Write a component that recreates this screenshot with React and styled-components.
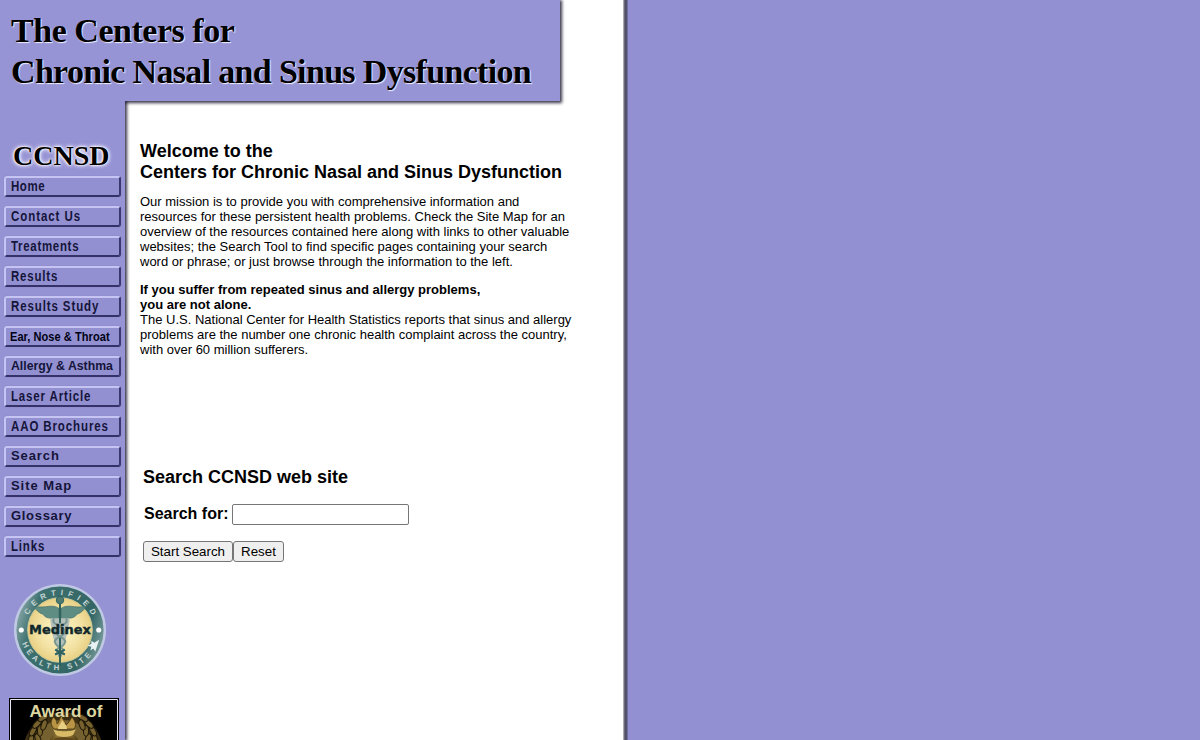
import React from "react"
import styled, { createGlobalStyle } from "styled-components"

const links = [
  { label: "Home", scale: 0.82, gap: 0.7 },
  { label: "Contact Us", scale: 0.82, gap: 1.15 },
  { label: "Treatments", scale: 0.82, gap: 0.85 },
  { label: "Results", scale: 0.82, gap: 1 },
  { label: "Results Study", scale: 0.82, gap: 1.1 },
  { label: "Ear, Nose & Throat", scale: 0.85, gap: 0.05, size: 13, nudge: -1, color: "#000014" },
  { label: "Allergy & Asthma", scale: 0.945, gap: 0, size: 13, up: 1 },
  { label: "Laser Article", scale: 0.82, gap: 1.05 },
  { label: "AAO Brochures", scale: 0.82, gap: 1.1 },
  { label: "Search", scale: 1, gap: 0.9, size: 13, up: 1 },
  { label: "Site Map", scale: 1, gap: 0.95, size: 13, up: 1 },
  { label: "Glossary", scale: 1, gap: 0.7, size: 13, up: 1 },
  { label: "Links", scale: 0.82, gap: 1 },
]

const App = () => {
  return (
    <>
      <GlobalStyle />
      <Page>
        <Banner>
          <BannerTitle>
            <BannerLine $gap={-0.47}>The Centers for</BannerLine>
            <BannerLine $gap={-0.67}>Chronic Nasal and Sinus Dysfunction</BannerLine>
          </BannerTitle>
        </Banner>
        <Columns>
          <Sidebar>
            <Logo>CCNSD</Logo>
            <Nav>
              {links.map(link => (
                <NavLink key={link.label} href="#">
                  <NavLabel
                    $scale={link.scale}
                    $gap={link.gap}
                    $size={link.size}
                    $up={link.up}
                    $nudge={link.nudge}
                    $color={link.color}
                  >
                    {link.label}
                  </NavLabel>
                </NavLink>
              ))}
            </Nav>
            <MedinexSeal />
            <AwardBadge />
          </Sidebar>
          <Content>
            <Heading>
              Welcome to the
              <br />
              Centers for Chronic Nasal and Sinus Dysfunction
            </Heading>
            <Text>
              Our mission is to provide you with comprehensive information and
              <br />
              resources for these persistent health problems. Check the Site Map for an
              <br />
              overview of the resources contained here along with links to other valuable
              <br />
              websites; the Search Tool to find specific pages containing your search
              <br />
              word or phrase; or just browse through the information to the left.
            </Text>
            <Text>
              <b>
                If you suffer from repeated sinus and allergy problems,
                <br />
                you are not alone.
              </b>
              <br />
              The U.S. National Center for Health Statistics reports that sinus and allergy
              <br />
              problems are the number one chronic health complaint across the country,
              <br />
              with over 60 million sufferers.
            </Text>
            <SearchForm onSubmit={e => e.preventDefault()}>
              <Heading>Search CCNSD web site</Heading>
              <SearchRow>
                <SearchLabel htmlFor="search">Search for:</SearchLabel>
                <SearchInput id="search" type="text" />
              </SearchRow>
              <ButtonRow>
                <FormButton type="submit" $width={90}>
                  Start Search
                </FormButton>
                <FormButton type="reset" $width={51}>
                  Reset
                </FormButton>
              </ButtonRow>
            </SearchForm>
          </Content>
        </Columns>
      </Page>
    </>
  )
}

const MedinexSeal = () => (
  <Seal viewBox="0 0 100 100">
    <defs>
      <radialGradient id="parchment">
        <stop offset="0" stopColor="#fff6c8" />
        <stop offset="0.65" stopColor="#f3e2a4" />
        <stop offset="1" stopColor="#e8d084" />
      </radialGradient>
      <linearGradient id="ring" x1="0" y1="0.3" x2="1" y2="0.6">
        <stop offset="0" stopColor="#8ba9a8" />
        <stop offset="0.2" stopColor="#3d7170" />
        <stop offset="0.8" stopColor="#326564" />
        <stop offset="1" stopColor="#779a9b" />
      </linearGradient>
      <path id="arcTop" d="M14.5 54v-4a35.5 35.5 0 0 1 71 0v4" />
      <path id="arcBottom" d="M9 50a41 41 0 0 0 82 0" />
    </defs>
    <circle cx="50" cy="50" r="47" fill="#bfc9e3" />
    <circle cx="50" cy="50" r="44.5" fill="url(#ring)" />
    <circle cx="50" cy="50" r="33" fill="url(#parchment)" stroke="#c8c99a" />
    <SealText $gap={4.8}>
      <textPath href="#arcTop" startOffset="52%" textAnchor="middle">
        CERTIFIED
      </textPath>
    </SealText>
    <SealText $gap={3.5}>
      <textPath href="#arcBottom" startOffset="46%" textAnchor="middle">
        HEALTH SITE
      </textPath>
    </SealText>
    <path
      d="M49 28C42 23 36 28 24 26c2 5 6 7 9 8 1 3 5 4 8 4 2 3 5 4 8 4zM51 28c7-5 13 0 25-2-2 5-6 7-9 8-1 3-5 4-8 4-2 3-5 4-8 4z"
      fill="#5f8c83"
      stroke="#3f7069"
      strokeWidth="0.7"
    />
    <path d="M40 38h20c-1 10-3 19-6 25l-4 9-5-9c-3-7-4-15-5-25z" fill="#b3c0bb" />
    <path
      d="M44 38c-5 7 12 8 11 14s-12 5-10 11 10 4 8 9-5 4-5 4M56 38c5 7-12 8-11 14s12 5 10 11-10 4-8 9 5 4 5 4"
      fill="none"
      stroke="#7c9893"
      strokeWidth="2"
    />
    <path d="M50 23v20M50 58v29M45 75l10-5M45 70l10 5" stroke="#2f625e" strokeWidth="2" />
    <circle cx="50" cy="19.5" r="3.8" fill="#4d7b72" stroke="#2f625e" />
    <circle cx="10.5" cy="50" r="2.6" fill="#fff" />
    <circle cx="89.5" cy="50" r="2.6" fill="#fff" />
    <path d="M90 60l-4 12-2-3-3 2 1-4-4-1 4-2 0-3 3 2z" fill="#e9f1f2" />
    <SealName x="50" y="54.2" textAnchor="middle" textLength="63" lengthAdjust="spacingAndGlyphs">
      Medinex
    </SealName>
  </Seal>
)

// laurel leaves, one side; mirrored for the other
const leaves = [
  [22, 42, 10],
  [24, 33, 28],
  [28, 26, 45],
  [34, 20, 62],
  [29, 41, -20],
  [31, 33, 0],
  [35, 27, 20],
]

const AwardBadge = () => (
  <Award viewBox="0 0 110 60">
    <defs>
      <linearGradient id="gold">
        <stop offset="0" stopColor="#5d4819" />
        <stop offset="0.35" stopColor="#a08341" />
        <stop offset="0.5" stopColor="#d1b670" />
        <stop offset="0.7" stopColor="#8e7132" />
        <stop offset="1" stopColor="#4a3813" />
      </linearGradient>
    </defs>
    <path d="M0 0h110v60H0z" fill="#000" />
    <path d="M1.5 60V1.5h107V60" fill="none" stroke="#e8e8f0" />
    <circle cx="54" cy="54" r="40" fill="#3a2d12" />
    <circle cx="54" cy="54" r="32" fill="#75602f" />
    <g fill="#77622e" stroke="#1d1607" strokeWidth="1">
      {leaves.map(([x, y, turn], i) => (
        <ellipse key={i} cx={x} cy={y} rx="2.6" ry="5.4" transform={`rotate(${turn} ${x} ${y})`} />
      ))}
      {leaves.map(([x, y, turn], i) => (
        <ellipse key={i} cx={108 - x} cy={y} rx="2.6" ry="5.4" transform={`rotate(${-turn} ${108 - x} ${y})`} />
      ))}
    </g>
    <path d="M41 60V43c0-5 6-8 14-8s14 3 14 8v17z" fill="url(#gold)" />
    <path
      d="M45 31c-5-6-2-9-1-12 3 2 4 4 4 7 3-3 2-6 5-8 0 4 4 5 4 9 3-2 4-5 6-8 3 4 5 8 2 12z"
      fill="#b99444"
      stroke="#46350f"
      strokeWidth="0.8"
    />
    <path d="M49 31c0-4 3-4 4-9 2 4 5 5 5 9z" fill="#e7cf83" />
    <path d="M44 31c3 3 20 3 23 0l-3 6c-4 2-13 2-17 0z" fill="#d8ba67" />
    <ellipse cx="55" cy="41.5" rx="10" ry="2.5" fill="#5e481c" />
    <AwardText x="20.5" y="19" textLength="73" lengthAdjust="spacingAndGlyphs">
      Award of
    </AwardText>
  </Award>
)

export default App

const GlobalStyle = createGlobalStyle`
  body {
    margin: 0;
    overflow: hidden;
    background: #928fd2;
    font-family: "Liberation Sans", Arial, sans-serif;
    color: #000;
  }
`

const Page = styled.div`
  box-sizing: border-box;
  width: 628px;
  height: 740px;
  overflow: hidden;
  background: linear-gradient(90deg, #aaaab0 0 1px, #69667e 1px 2px, #53506a 2px 4px, #706da0 4px 5px) right / 5px 100% no-repeat #fff;
`

const Banner = styled.header`
  position: relative;
  z-index: 2;
  box-sizing: border-box;
  width: 560px;
  height: 101px;
  padding: 10px 0 0 11px;
  background: #9794d5;
  box-shadow: 1px 1px 3px 1px rgba(20, 18, 40, 0.85);
`

const BannerTitle = styled.h1`
  margin: 0;
  font: bold 34px/41px "Liberation Serif", "Times New Roman", serif;
  white-space: nowrap;
  text-shadow: 1px 1px 1px #f0efff;
`

const BannerLine = styled.span`
  display: block;
  letter-spacing: ${({ $gap }) => $gap}px;
`

const Columns = styled.div`
  display: flex;
  height: 639px;
`

const Sidebar = styled.aside`
  position: relative;
  z-index: 3;
  display: flex;
  flex-direction: column;
  flex: none;
  box-sizing: border-box;
  width: 125px;
  height: 639px;
  padding-top: 38px;
  background: #9693d4;
  box-shadow: 1px 0 3px 1px rgba(20, 18, 40, 0.85);
  clip-path: inset(0 -6px 0 0);
`

const Logo = styled.div`
  flex: none;
  height: 37px;
  padding-left: 13px;
  font: bold 28px/34px "Liberation Serif", "Times New Roman", serif;
  text-shadow: 0 0 2px #fff, 0 0 3px #fff, 0 0 4px #e4e3fa, 0 0 5px #dcdaf8;
`

const Nav = styled.nav`
  display: flex;
  flex-direction: column;
  flex: none;
  gap: 9px;
  padding-left: 4px;
`

const NavLink = styled.a`
  box-sizing: border-box;
  width: 117px;
  height: 21px;
  border: 2px solid;
  border-color: #c6c4f3 #3a376f #35326a #c6c4f3;
  border-radius: 3px;
  background: #9290d1;
  text-decoration: none;
  box-shadow: 0 0 1px #6f6cab;
`

const NavLabel = styled.span`
  display: block;
  width: max-content;
  margin: ${({ $up }) => ($up ? -1 : 0)}px 0 0 ${({ $nudge = 0 }) => 5 + $nudge}px;
  font-size: ${({ $size = 14 }) => $size}px;
  font-weight: bold;
  line-height: 17px;
  letter-spacing: ${({ $gap }) => $gap}px;
  white-space: nowrap;
  color: ${({ $color = "#15143a" }) => $color};
  transform: scaleX(${({ $scale }) => $scale});
  transform-origin: left;
`

const Seal = styled.svg`
  flex: none;
  width: 98px;
  height: 98px;
  margin: 24px 0 0 11px;
`

const SealText = styled.text`
  font: bold 8px "Liberation Sans", Arial, sans-serif;
  letter-spacing: ${({ $gap }) => $gap}px;
  fill: #c5d5d3;
`

const SealName = styled.text`
  font: bold 13px "DejaVu Sans", sans-serif;
  fill: #10282b;
  stroke: #10282b;
  stroke-width: 0.4px;
`

const Award = styled.svg`
  flex: none;
  width: 110px;
  height: 60px;
  margin: 19px 0 0 9px;
`

const AwardText = styled.text`
  font: bold 16px "Liberation Sans", Arial, sans-serif;
  fill: #ddd6a0;
`

const Content = styled.main`
  padding: 40px 0 0 15px;
  white-space: nowrap;
`

const Heading = styled.h2`
  margin: 0;
  font-size: 18px;
  line-height: 21px;
`

const Text = styled.p`
  margin: 11px 0 13px;
  font-size: 13px;
  line-height: 15px;
`

const SearchForm = styled.form`
  padding: 97px 0 0 3px;
`

const SearchRow = styled.div`
  display: flex;
  gap: 4px;
  margin-top: 16px;
`

const SearchLabel = styled.label`
  padding-left: 1px;
  font-size: 16px;
  font-weight: bold;
  line-height: 19px;
`

const SearchInput = styled.input`
  box-sizing: border-box;
  width: 177px;
  height: 21px;
  border: 1px solid #767676;
  border-radius: 2px;
`

const ButtonRow = styled.div`
  display: flex;
  margin-top: 16px;
`

const FormButton = styled.button`
  box-sizing: border-box;
  width: ${({ $width }) => $width}px;
  height: 21px;
  padding: 0;
  border: 1px solid #767676;
  border-radius: 3px;
  background: #efefef;
  color: #000;
  font: 13.333px "Liberation Sans", Arial, sans-serif;
`
